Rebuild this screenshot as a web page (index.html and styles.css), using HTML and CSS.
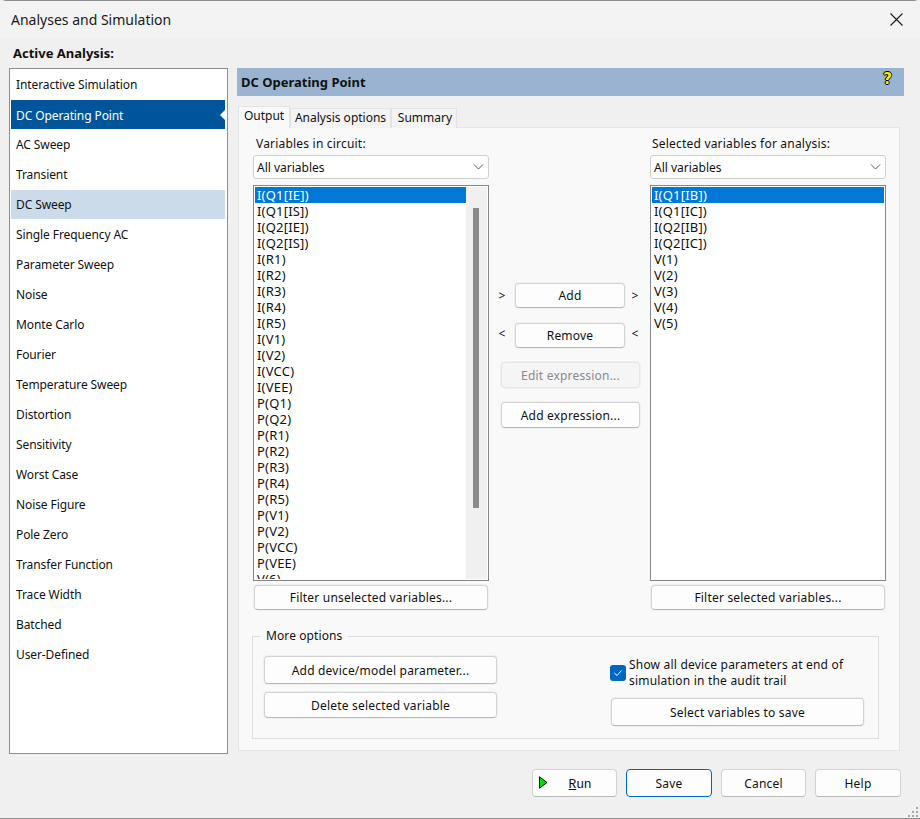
FILE: index.html
```html
<!DOCTYPE html>
<html lang="en">
<head>
<meta charset="utf-8">
<title>Analyses and Simulation</title>
<link rel="stylesheet" href="styles.css">
</head>
<body>
<div class="window">
  <header class="titlebar">
    <span class="title">Analyses and Simulation</span>
    <svg class="close" width="13" height="13" viewBox="0 0 13 13"><path d="M.5 .5L12.5 12.5M12.5 .5L.5 12.5" stroke="#1a1a1a" stroke-width="1.1" fill="none"/></svg>
  </header>
  <div class="active-label">Active Analysis:</div>
  <div class="main">
    <nav class="nav">
      <div class="nav-item">Interactive Simulation</div>
      <div class="nav-item selected">DC Operating Point</div>
      <div class="nav-item">AC Sweep</div>
      <div class="nav-item">Transient</div>
      <div class="nav-item hover">DC Sweep</div>
      <div class="nav-item">Single Frequency AC</div>
      <div class="nav-item">Parameter Sweep</div>
      <div class="nav-item">Noise</div>
      <div class="nav-item">Monte Carlo</div>
      <div class="nav-item">Fourier</div>
      <div class="nav-item">Temperature Sweep</div>
      <div class="nav-item">Distortion</div>
      <div class="nav-item">Sensitivity</div>
      <div class="nav-item">Worst Case</div>
      <div class="nav-item">Noise Figure</div>
      <div class="nav-item">Pole Zero</div>
      <div class="nav-item">Transfer Function</div>
      <div class="nav-item">Trace Width</div>
      <div class="nav-item">Batched</div>
      <div class="nav-item">User-Defined</div>
    </nav>
    <section class="content">
      <div class="banner">
        <span class="banner-title">DC Operating Point</span>
        <span class="help-mark">?</span>
      </div>
      <div class="tabs">
        <div class="tab active">Output</div>
        <div class="tab options">Analysis options</div>
        <div class="tab summary">Summary</div>
      </div>
      <div class="tab-body">
        <div class="columns">
          <div class="col">
            <div class="col-label">Variables in circuit:</div>
            <div class="select"><span>All variables</span><svg width="11" height="6" viewBox="0 0 11 6"><path d="M1 .5L5.5 5L10 .5" stroke="#555" fill="none"/></svg></div>
            <div class="listbox">
              <div class="rows">
                <div class="row sel">I(Q1[IE])</div>
                <div class="row">I(Q1[IS])</div>
                <div class="row">I(Q2[IE])</div>
                <div class="row">I(Q2[IS])</div>
                <div class="row">I(R1)</div>
                <div class="row">I(R2)</div>
                <div class="row">I(R3)</div>
                <div class="row">I(R4)</div>
                <div class="row">I(R5)</div>
                <div class="row">I(V1)</div>
                <div class="row">I(V2)</div>
                <div class="row">I(VCC)</div>
                <div class="row">I(VEE)</div>
                <div class="row">P(Q1)</div>
                <div class="row">P(Q2)</div>
                <div class="row">P(R1)</div>
                <div class="row">P(R2)</div>
                <div class="row">P(R3)</div>
                <div class="row">P(R4)</div>
                <div class="row">P(R5)</div>
                <div class="row">P(V1)</div>
                <div class="row">P(V2)</div>
                <div class="row">P(VCC)</div>
                <div class="row">P(VEE)</div>
                <div class="row">V(6)</div>
              </div>
              <div class="scrollbar"><div class="thumb"></div></div>
            </div>
            <button class="btn filter">Filter unselected variables...</button>
          </div>
          <div class="middle">
            <div class="move-row"><span class="arrow">&gt;</span><button class="btn move">Add</button><span class="arrow">&gt;</span></div>
            <div class="move-row"><span class="arrow up">&lt;</span><button class="btn move">Remove</button><span class="arrow up">&lt;</span></div>
            <button class="btn expr disabled">Edit expression...</button>
            <button class="btn expr">Add expression...</button>
          </div>
          <div class="col">
            <div class="col-label">Selected variables for analysis:</div>
            <div class="select"><span>All variables</span><svg width="11" height="6" viewBox="0 0 11 6"><path d="M1 .5L5.5 5L10 .5" stroke="#555" fill="none"/></svg></div>
            <div class="listbox">
              <div class="rows">
                <div class="row sel">I(Q1[IB])</div>
                <div class="row">I(Q1[IC])</div>
                <div class="row">I(Q2[IB])</div>
                <div class="row">I(Q2[IC])</div>
                <div class="row">V(1)</div>
                <div class="row">V(2)</div>
                <div class="row">V(3)</div>
                <div class="row">V(4)</div>
                <div class="row">V(5)</div>
              </div>
            </div>
            <button class="btn filter">Filter selected variables...</button>
          </div>
        </div>
        <fieldset class="more">
          <legend>More options</legend>
          <div class="more-left">
            <button class="btn param">Add device/model parameter...</button>
            <button class="btn param short">Delete selected variable</button>
          </div>
          <div class="more-right">
            <label class="check-row">
              <span class="check"><svg width="10" height="8" viewBox="0 0 10 8"><path d="M1.5 4.2L4 6.5L8.5 1.5" stroke="#fff" stroke-width="1" fill="none"/></svg></span>
              <span>Show all device parameters at end of<br>simulation in the audit trail</span>
            </label>
            <button class="btn save-vars">Select variables to save</button>
          </div>
        </fieldset>
      </div>
    </section>
  </div>
  <footer class="footer">
    <button class="btn foot run"><svg class="run-icon" width="9" height="13" viewBox="0 0 9 13"><path d="M.5 .8L8 6.5L.5 12.2Z" fill="#00e000" stroke="#111" stroke-width="1"/></svg><span class="run-text"><u>R</u>un</span></button>
    <button class="btn foot default">Save</button>
    <button class="btn foot">Cancel</button>
    <button class="btn foot last">Help</button>
  </footer>
  <svg class="grip" width="11" height="11" viewBox="0 0 11 11"><path d="M8 1h2v2H8zM4 5h2v2H4zM8 5h2v2H8zM0 9h2v2H0zM4 9h2v2H4zM8 9h2v2H8z" fill="#a8a8a8"/></svg>
</div>
</body>
</html>
```

FILE: styles.css
```css
* { box-sizing: border-box; }
html, body { margin: 0; padding: 0; }
body { width: 920px; height: 819px; overflow: hidden; background: #f0f0f0; font-family: "Noto Sans", "Open Sans", sans-serif; font-size: 12px; color: #111; }
.window { position: relative; width: 920px; height: 819px; background: #f0f0f0; border-top: 1px solid #8c8c8c; border-bottom: 1px solid #8c8c8c; border-top-left-radius: 6px; border-top-right-radius: 6px; }
.titlebar { height: 37px; display: flex; align-items: center; justify-content: space-between; padding: 0 17px 0 11px; background: #f3f3f3; }
.title { font-size: 14px; color: #1a1a1a; }
.close { display: block; }
.active-label { height: 30px; padding: 6px 0 0 13px; font-weight: 700; font-size: 13px; line-height: 18px; }
.main { display: flex; padding-left: 9px; gap: 9px; align-items: flex-start; }
.nav { width: 219px; height: 686px; background: #fff; border: 1px solid #8a8f96; padding: 1px 2px 0 1px; letter-spacing: -.1px; }
.nav-item { height: 29px; margin-bottom: 1px; padding-left: 5px; line-height: 29px; position: relative; }
.nav-item.selected { background: #005499; color: #fff; line-height: 31px; }
.nav-item.selected::after { content: ""; position: absolute; right: 0; top: 10px; border: 5px solid transparent; border-left: 0; border-right: 5px solid #fff; }
.nav-item.hover { background: #cbdbea; }
.content { width: 667px; }
.banner { height: 28px; background: #9ab3d0; display: flex; align-items: center; justify-content: space-between; padding: 0 12px 0 4px; }
.banner-title { font-weight: 700; font-size: 13px; }
.help-mark { font-family: "DejaVu Sans", sans-serif; font-weight: 700; font-size: 15px; line-height: 15px; margin-top: -6px; color: #ffee00; text-shadow: -1px 0 #000, 1px 0 #000, 0 -1px #000, 0 1px #000; }
.tabs { display: flex; height: 22px; margin-top: 9px; padding-left: 1px; align-items: flex-end; position: relative; z-index: 1; }
.tab { height: 20px; line-height: 18px; text-align: center; background: #f3f3f3; border: 1px solid #e3e3e3; border-bottom: 0; position: relative; top: 1px; white-space: nowrap; }
.tab.active { width: 52px; height: 22px; line-height: 18px; background: #f9f9f9; }
.tab.options { width: 101px; }
.tab.summary { width: 66px; padding-left: 2px; }
.tab-body { width: 662px; height: 624px; margin-left: 1px; background: #f9f9f9; border: 1px solid #e5e5e5; padding: 8px 13px 0 14px; }
.columns { display: flex; justify-content: space-between; }
.col { width: 236px; display: flex; flex-direction: column; }
.col-label { height: 19px; line-height: 16px; padding-left: 2px; letter-spacing: .2px; }
.col:first-child .col-label { padding-left: 3px; }
.select { height: 24px; flex: none; background: #fff; border: 1px solid #d0d0d0; border-radius: 3px; display: flex; align-items: center; justify-content: space-between; padding: 0 4px 0 3px; }
.listbox { height: 396px; margin-top: 6px; flex: none; background: #fff; border: 1px solid #82878e; padding: 1px; display: flex; overflow: hidden; }
.rows { flex: 1; min-width: 0; height: 392px; overflow: hidden; font-size: 13px; letter-spacing: .2px; }
.row { height: 16px; line-height: 16px; padding-left: 2px; white-space: nowrap; color: #111; }
.row.sel { background: #0078d7; color: #fff; }
.scrollbar { width: 21px; height: 100%; background: #f0f0f0; padding: 21px 7px 0 7px; }
.thumb { width: 6px; height: 300px; background: #8a8a8a; }
.btn { font: inherit; color: #111; background: #fdfdfd; border: 1px solid #d3d3d3; border-bottom-color: #b8b8b8; border-radius: 4px; box-shadow: 0 0 0 1px #f0f0f0; padding: 0; cursor: default; letter-spacing: .2px; }
.filter { height: 25px; margin: 4px 1px 0 1px; flex: none; }
.middle { flex: 1; display: flex; flex-direction: column; align-items: center; padding: 146px 0 0 2px; }
.move-row { height: 26px; margin: 0 0 14px -4px; display: flex; align-items: center; justify-content: center; }
.arrow { width: 14px; text-align: center; font-size: 12px; margin-right: 6px; }
.move + .arrow { margin-right: 0; margin-left: 3px; }
.arrow.up { margin-top: -4px; }
.move { width: 110px; height: 25px; }
.expr { width: 139px; height: 26px; margin-bottom: 14px; flex: none; }
.disabled { color: #8a8a8a; background: #f5f5f5; border-color: #e6e6e6; }
.more { margin: 19px 7px 0 -1px; padding: 13px 14px 0 11px; height: 110px; border: 1px solid #dedede; display: flex; justify-content: space-between; min-width: 0; }
.more legend { margin-left: -4px; padding: 0 6px; line-height: 14px; letter-spacing: .1px; }
.more-left { width: 233px; display: flex; flex-direction: column; gap: 8px; }
.param { height: 28px; flex: none; }
.param.short { height: 26px; }
.more-right { width: 253px; }
.check-row { display: flex; align-items: center; gap: 3px; height: 32px; margin: 1px 0 0 -1px; line-height: 16px; letter-spacing: .2px; }
.check { width: 16px; height: 16px; flex: none; background: #0067c0; border-radius: 3px; display: flex; align-items: center; justify-content: center; }
.save-vars { width: 253px; height: 28px; margin-top: 9px; }
.footer { display: flex; justify-content: flex-end; gap: 9px; padding: 15px 19px 0 0; }
.foot { width: 85px; height: 28px; position: relative; }
.default { border: 1px solid #0067c0; width: 86px; }
.last { width: 86px; }
.run-icon { position: absolute; left: 6px; top: 6px; }
.run-text { font-family: "Liberation Mono", monospace; font-size: 13px; padding-left: 11px; letter-spacing: -.2px; }
.grip { position: absolute; right: 1px; bottom: 1px; }
```
